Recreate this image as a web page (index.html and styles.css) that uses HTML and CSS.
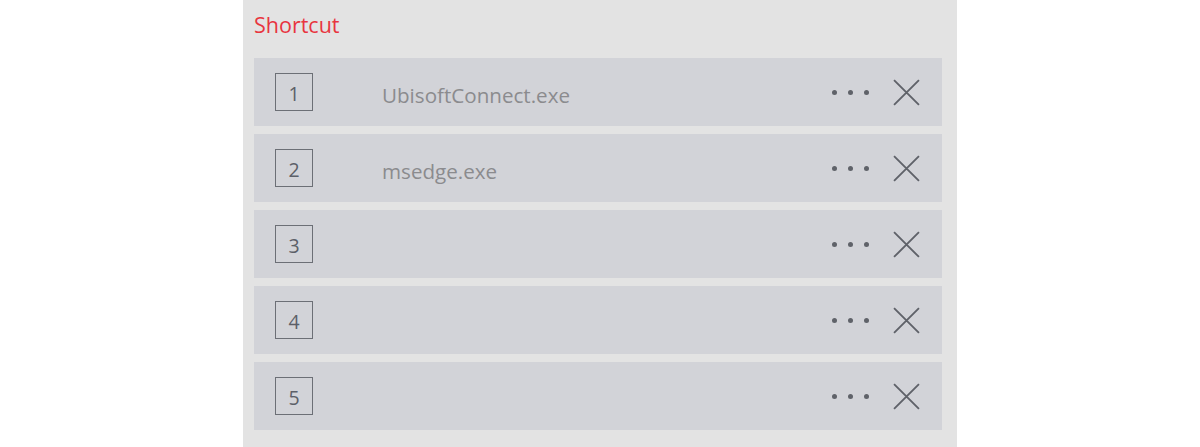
FILE: index.html
```html
<!DOCTYPE html>
<html>
<head>
<meta charset="utf-8">
<link rel="stylesheet" href="styles.css">
</head>
<body>
<div class="panel">
  <div class="title">Shortcut</div>
  <div class="list">
    <div class="row"><div class="num">1</div><div class="name">UbisoftConnect.exe</div><div class="actions"><div class="dots"><span></span><span></span><span></span></div><svg class="close" viewBox="0 0 26 26"><path d="M1 1L25 25M25 1L1 25"/></svg></div></div>
    <div class="row"><div class="num">2</div><div class="name">msedge.exe</div><div class="actions"><div class="dots"><span></span><span></span><span></span></div><svg class="close" viewBox="0 0 26 26"><path d="M1 1L25 25M25 1L1 25"/></svg></div></div>
    <div class="row"><div class="num">3</div><div class="name"></div><div class="actions"><div class="dots"><span></span><span></span><span></span></div><svg class="close" viewBox="0 0 26 26"><path d="M1 1L25 25M25 1L1 25"/></svg></div></div>
    <div class="row"><div class="num">4</div><div class="name"></div><div class="actions"><div class="dots"><span></span><span></span><span></span></div><svg class="close" viewBox="0 0 26 26"><path d="M1 1L25 25M25 1L1 25"/></svg></div></div>
    <div class="row"><div class="num">5</div><div class="name"></div><div class="actions"><div class="dots"><span></span><span></span><span></span></div><svg class="close" viewBox="0 0 26 26"><path d="M1 1L25 25M25 1L1 25"/></svg></div></div>
  </div>
</div>
</body>
</html>
```
FILE: styles.css
```css
html, body {
  margin: 0;
  padding: 0;
  background: #ffffff;
  height: 447px;
  overflow: hidden;
}
body {
  font-family: "Open Sans", "Noto Sans", sans-serif;
}
.panel {
  width: 714px;
  height: 447px;
  margin-left: 243px;
  background: #e3e3e3;
  box-sizing: border-box;
  padding: 9px 15px 0 11px;
}
.title {
  color: #e8353f;
  font-size: 21.5px;
  line-height: 31px;
  height: 49px;
}
.list {
  display: flex;
  flex-direction: column;
  gap: 8px;
}
.row {
  height: 68px;
  background: #d2d3d8;
  display: flex;
  align-items: center;
  padding-left: 21px;
}
.num {
  width: 36px;
  height: 33px;
  padding-top: 3px;
  border: 1px solid #6c6f76;
  color: #5c6068;
  font-size: 19.5px;
  line-height: 20px;
  display: flex;
  align-items: center;
  justify-content: center;
  flex: none;
}
.name {
  margin-left: 69px;
  padding-top: 6px;
  flex: 1;
  color: #8b8b8e;
  font-size: 20.6px;
}
.actions {
  display: flex;
  align-items: center;
  margin-right: 22px;
}
.dots {
  display: flex;
  gap: 11px;
  margin-right: 24px;
}
.dots span {
  width: 5px;
  height: 5px;
  border-radius: 50%;
  background: #5f6269;
}
.close {
  width: 27px;
  height: 27px;
  fill: none;
  stroke: #5f6269;
  stroke-width: 1.8;
}
```
